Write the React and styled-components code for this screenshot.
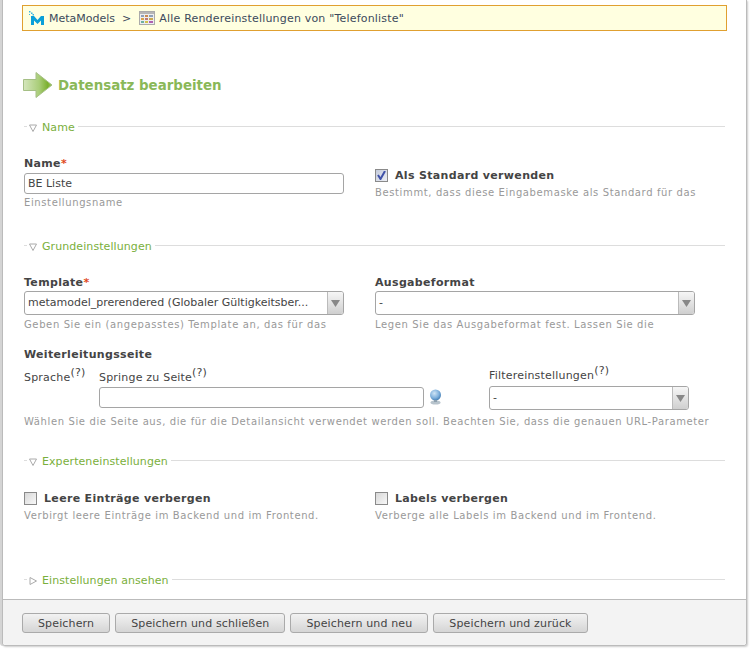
import styled, { createGlobalStyle } from "styled-components";

const GlobalStyle = createGlobalStyle`
    html, body {
        margin: 0;
        padding: 0;
        background: #fff;
    }
    body {
        font-family: "DejaVu Sans", Verdana, sans-serif;
        font-size: 11px;
        color: #444;
    }
`

const MetaModelsLogo = () => (
    <svg width="17" height="15" viewBox="0 0 17 15">
        <path d="M2 14V5h3l3.500 4L12 5h3v9h-3V9.500L8.500 13 5 9.500V14z" fill="#0a9fd8" />
        <g fill="#38b6e4">
            <rect x="0" y="0" width="1.500" height="1.500" />
            <rect x="2" y="1.500" width="1.500" height="1.500" />
            <rect x="3.500" y="3" width="1.500" height="1.500" />
            <rect x="0" y="3" width="1" height="1" />
        </g>
    </svg>
)

const RenderSettingsIcon = () => (
    <svg width="16" height="14" viewBox="0 0 16 14">
        <rect x=".5" y=".5" width="15" height="13" fill="#eee" stroke="#aaa" />
        <rect x="1" y="1" width="14" height="2" fill="#b5b5b5" />
        <rect x="2" y="4" width="3" height="2" fill="#8ea0b8" />
        <rect x="6" y="4" width="3" height="2" fill="#c98a50" />
        <rect x="10" y="4" width="4" height="2" fill="#8ea0b8" />
        <rect x="2" y="7" width="3" height="2" fill="#d9a24a" />
        <rect x="6" y="7" width="3" height="2" fill="#b87a7a" />
        <rect x="10" y="7" width="4" height="2" fill="#c9a94e" />
        <rect x="2" y="10" width="3" height="2" fill="#6fb0a0" />
        <rect x="6" y="10" width="3" height="2" fill="#d4c04e" />
        <rect x="10" y="10" width="4" height="2" fill="#b060b0" />
    </svg>
)

const HeadlineArrow = () => (
    <svg width="30" height="26" viewBox="0 0 30 26">
        <defs>
            <linearGradient id="arrowFill" x1="0" x2="1" y1="0" y2="0">
                <stop offset="0" stopColor="#d5e6bd" />
                <stop offset=".55" stopColor="#a9cd78" />
                <stop offset=".85" stopColor="#7bb02e" />
                <stop offset="1" stopColor="#9cc65e" />
            </linearGradient>
        </defs>
        <path d="M.5 7.500h12.500V.5L29 13 13 25.500v-7H.5z" fill="url(#arrowFill)" stroke="#a5bf85" />
    </svg>
)

const GlobeIcon = () => (
    <svg width="13" height="16" viewBox="0 0 13 16">
        <defs>
            <radialGradient id="globeFill" cx=".4" cy=".35" r=".7">
                <stop offset="0" stopColor="#cfe4f5" />
                <stop offset=".6" stopColor="#7fb0dc" />
                <stop offset="1" stopColor="#3d78b0" />
            </radialGradient>
        </defs>
        <circle cx="6.500" cy="6" r="5.500" fill="url(#globeFill)" />
        <ellipse cx="6.500" cy="13.500" rx="5" ry="2" fill="#b7c3cc" />
        <rect x="5" y="11" width="3" height="2" fill="#8ea0ae" />
    </svg>
)

const ArrowDown = () => (
    <svg width="9" height="7" viewBox="0 0 9 7">
        <path d="M0 0h9L4.500 7z" fill="#888" />
    </svg>
)

const Page = styled.div`
    width: 751px;
    height: 649px;
    box-sizing: border-box;
    padding-right: 4px;
    padding-bottom: 3px;
    overflow: hidden;
`
const Panel = styled.div`
    height: 100%;
    box-sizing: border-box;
    margin-left: 2px;
    border: 1px solid #bbb;
    border-top: 0;
    border-radius: 0 0 3px 3px;
    box-shadow: -2px 0 0 #d4d4d4, 1px 1px 2px #ccc;
    display: flex;
    flex-direction: column;
`
const Content = styled.div`
    flex: 1;
    padding: 5px 21px 0 19px;
`
const Breadcrumb = styled.div`
    display: flex;
    align-items: center;
    box-sizing: border-box;
    width: 705px;
    height: 26px;
    padding-left: 6px;
    border: 1px solid #e0a030;
    background: #ffffe0;
    color: #3c4a5c;
`
const CrumbSep = styled.span`
    margin: 0 8px 0 7px;
`
const CrumbIcon = styled.span`
    display: flex;
    margin-right: ${ props => props.$gap }px;
`
const CrumbTitle = styled.span`
    letter-spacing: .19px;
`
const Headline = styled.h1`
    display: flex;
    align-items: center;
    gap: 5px;
    margin: 41px 0 0 1px;
    height: 26px;
    font-size: 13.4px;
    line-height: 26px;
    font-weight: bold;
    color: #8ab858;
`
const HeadlineText = styled.span`
    margin-top: 2px;
`
const Section = styled.section`
    margin-top: ${ props => props.$top }px;
`
const Legend = styled.div`
    display: flex;
    align-items: center;
    height: 14px;
    padding-left: 2px;
    color: #7aaf3c;
    line-height: 14px;
    letter-spacing: .08px;

    &::before {
        content: "";
        width: 3px;
        height: 1px;
        margin: -3px 2px 0 0;
        background: #ddd;
    }
    &::after {
        content: "";
        flex: 1;
        height: 1px;
        margin: -3px 0 0 3px;
        background: #ddd;
    }
`
const Toggle = styled.svg`
    width: 8px;
    height: 8px;
    margin-right: 5px;
    flex: none;
`
const Columns = styled.div`
    display: grid;
    grid-template-columns: 351px 1fr;
    margin-top: ${ props => props.$top }px;
    padding-left: 2px;
`
const Label = styled.div`
    font-weight: bold;
    line-height: 14px;
    letter-spacing: .33px;
    color: #444;

    & em {
        color: #e04a1c;
        font-style: normal;
    }
`
const TextInput = styled.input`
    display: block;
    box-sizing: border-box;
    width: ${ props => props.$width }px;
    height: 21px;
    margin: 2px 0 0;
    padding: 0 3px;
    border: 1px solid #a5a5a5;
    border-radius: 3px;
    background: #fff;
    font: 11px "DejaVu Sans", Verdana, sans-serif;
    color: #444;
    outline: none;
`
const Select = styled.div`
    display: flex;
    box-sizing: border-box;
    width: ${ props => props.$width }px;
    height: 24px;
    margin-top: ${ props => props.$top ?? 1 }px;
    margin-bottom: ${ props => props.$bottom || 0 }px;
    border: 1px solid #a5a5a5;
    border-radius: 3px;
    background: #fff;
    overflow: hidden;
`
const SelectValue = styled.div`
    flex: 1;
    padding-left: 3px;
    line-height: 22px;
    color: #444;
    white-space: nowrap;
`
const SelectArrow = styled.div`
    display: flex;
    align-items: center;
    justify-content: center;
    width: 15px;
    border-left: 1px solid #bbb;
    background: linear-gradient(#f6f6f6, #cfcfcf);
`
const Help = styled.div`
    margin-top: ${ props => props.$top || 3 }px;
    font-size: 10px;
    line-height: 13px;
    letter-spacing: .62px;
    color: #999;
    white-space: nowrap;
`
const CheckRow = styled.div`
    display: flex;
    align-items: center;
    gap: 7px;
    height: 14px;
    margin-top: ${ props => props.$top || 0 }px;
    margin-bottom: 4px;
    font-weight: bold;
    letter-spacing: .33px;
    color: #444;
`
const CheckBox = styled.span`
    display: flex;
    align-items: center;
    justify-content: center;
    box-sizing: border-box;
    width: 13px;
    height: 13px;
    border: 1px solid #8a8a8a;
    background: ${ props => props.$checked
        ? 'linear-gradient(135deg, #c4cbdc, #eceef4)'
        : 'linear-gradient(135deg, #d8d8d8, #f8f8f8)' };
`
const LinkBlock = styled.div`
    margin-top: 17px;
    padding-left: 2px;
`
const LinkRow = styled.div`
    display: flex;
    align-items: flex-end;
    margin-top: 7px;
`
const LinkCell = styled.div`
    width: ${ props => props.$width }px;
    flex: none;
`
const SmallLabel = styled.div`
    line-height: 14px;
    letter-spacing: .2px;
    white-space: nowrap;
    color: #444;

    & sup {
        font-size: 11px;
        line-height: 0;
    }
`
const SpracheField = styled.div`
    height: 23px;
`
const PickerRow = styled.div`
    display: flex;
    align-items: center;
    gap: 5px;
`
const Footer = styled.div`
    display: flex;
    gap: 5px;
    height: 46px;
    box-sizing: border-box;
    padding: 13px 19px 0;
    border-top: 1px solid #bbb;
    background: #f3f3f3;
    border-radius: 0 0 3px 3px;
`
const Button = styled.button`
    height: 20px;
    padding: 0 15px;
    border: 1px solid #aaa;
    border-radius: 3px;
    background: linear-gradient(#f2f2f2, #d5d5d5);
    font: 11px "DejaVu Sans", Verdana, sans-serif;
    letter-spacing: .14px;
    color: #444;
    white-space: nowrap;
`

const SectionTitle = ({ title, open = true }) => (
    <Legend>
        <Toggle viewBox="0 0 8 8">
            { open
                ? <path d="M.5 1h7L4 7.500z" fill="none" stroke="#aaa" />
                : <path d="M1 .5v7L7.500 4z" fill="none" stroke="#aaa" /> }
        </Toggle>
        { title }
    </Legend>
)

const Check = ({ checked, top, children }) => (
    <CheckRow $top={ top }>
        <CheckBox $checked={ checked }>
            { checked && (
                <svg width="9" height="9" viewBox="0 0 9 9">
                    <path d="M1 4l2.500 4L8 0" fill="none" stroke="#3f51a8" strokeWidth="2" />
                </svg>
            ) }
        </CheckBox>
        { children }
    </CheckRow>
)

const Dropdown = ({ width, value, top, bottom }) => (
    <Select $width={ width } $top={ top } $bottom={ bottom }>
        <SelectValue>{ value }</SelectValue>
        <SelectArrow><ArrowDown /></SelectArrow>
    </Select>
)

const App = () => {
    const buttons = ["Speichern", "Speichern und schließen", "Speichern und neu", "Speichern und zurück"];

    return (
        <Page>
            <GlobalStyle />
            <Panel>
                <Content>
                    <Breadcrumb>
                        <CrumbIcon $gap={ 3 }><MetaModelsLogo /></CrumbIcon>
                        MetaModels
                        <CrumbSep>&gt;</CrumbSep>
                        <CrumbIcon $gap={ 4 }><RenderSettingsIcon /></CrumbIcon>
                        <CrumbTitle>Alle Rendereinstellungen von "Telefonliste"</CrumbTitle>
                    </Breadcrumb>

                    <Headline><HeadlineArrow /><HeadlineText>Datensatz bearbeiten</HeadlineText></Headline>

                    <Section $top={ 23 }>
                        <SectionTitle title="Name" />
                        <Columns $top={ 22 }>
                            <div>
                                <Label>Name<em>*</em></Label>
                                <TextInput $width={ 320 } defaultValue="BE Liste" />
                                <Help $top={ 2 }>Einstellungsname</Help>
                            </div>
                            <div>
                                <Check checked top={ 11 }>Als Standard verwenden</Check>
                                <Help>Bestimmt, dass diese Eingabemaske als Standard für das</Help>
                            </div>
                        </Columns>
                    </Section>

                    <Section $top={ 31 }>
                        <SectionTitle title="Grundeinstellungen" />
                        <Columns $top={ 22 }>
                            <div>
                                <Label>Template<em>*</em></Label>
                                <Dropdown width={ 320 } value="metamodel_prerendered (Globaler Gültigkeitsber..." />
                                <Help>Geben Sie ein (angepasstes) Template an, das für das</Help>
                            </div>
                            <div>
                                <Label>Ausgabeformat</Label>
                                <Dropdown width={ 320 } value="-" />
                                <Help>Legen Sie das Ausgabeformat fest. Lassen Sie die</Help>
                            </div>
                        </Columns>
                        <LinkBlock>
                            <Label>Weiterleitungsseite</Label>
                            <LinkRow>
                                <LinkCell $width={ 75 }>
                                    <SmallLabel>Sprache<sup>(?)</sup></SmallLabel>
                                    <SpracheField />
                                </LinkCell>
                                <LinkCell $width={ 390 }>
                                    <SmallLabel>Springe zu Seite<sup>(?)</sup></SmallLabel>
                                    <PickerRow>
                                        <TextInput $width={ 325 } />
                                        <GlobeIcon />
                                    </PickerRow>
                                </LinkCell>
                                <LinkCell $width={ 200 }>
                                    <SmallLabel>Filtereinstellungen<sup>(?)</sup></SmallLabel>
                                    <Dropdown width={ 200 } value="-" top={ 3 } bottom={ -2 } />
                                </LinkCell>
                            </LinkRow>
                            <Help $top={ 7 }>Wählen Sie die Seite aus, die für die Detailansicht verwendet werden soll. Beachten Sie, dass die genauen URL-Parameter</Help>
                        </LinkBlock>
                    </Section>

                    <Section $top={ 27 }>
                        <SectionTitle title="Experteneinstellungen" />
                        <Columns $top={ 22 }>
                            <div>
                                <Check>Leere Einträge verbergen</Check>
                                <Help>Verbirgt leere Einträge im Backend und im Frontend.</Help>
                            </div>
                            <div>
                                <Check>Labels verbergen</Check>
                                <Help>Verberge alle Labels im Backend und im Frontend.</Help>
                            </div>
                        </Columns>
                    </Section>

                    <Section $top={ 52 }>
                        <SectionTitle title="Einstellungen ansehen" open={ false } />
                    </Section>
                </Content>

                <Footer>
                    { buttons.map( label => <Button key={ label }>{ label }</Button> ) }
                </Footer>
            </Panel>
        </Page>
    );
}

export default App;
